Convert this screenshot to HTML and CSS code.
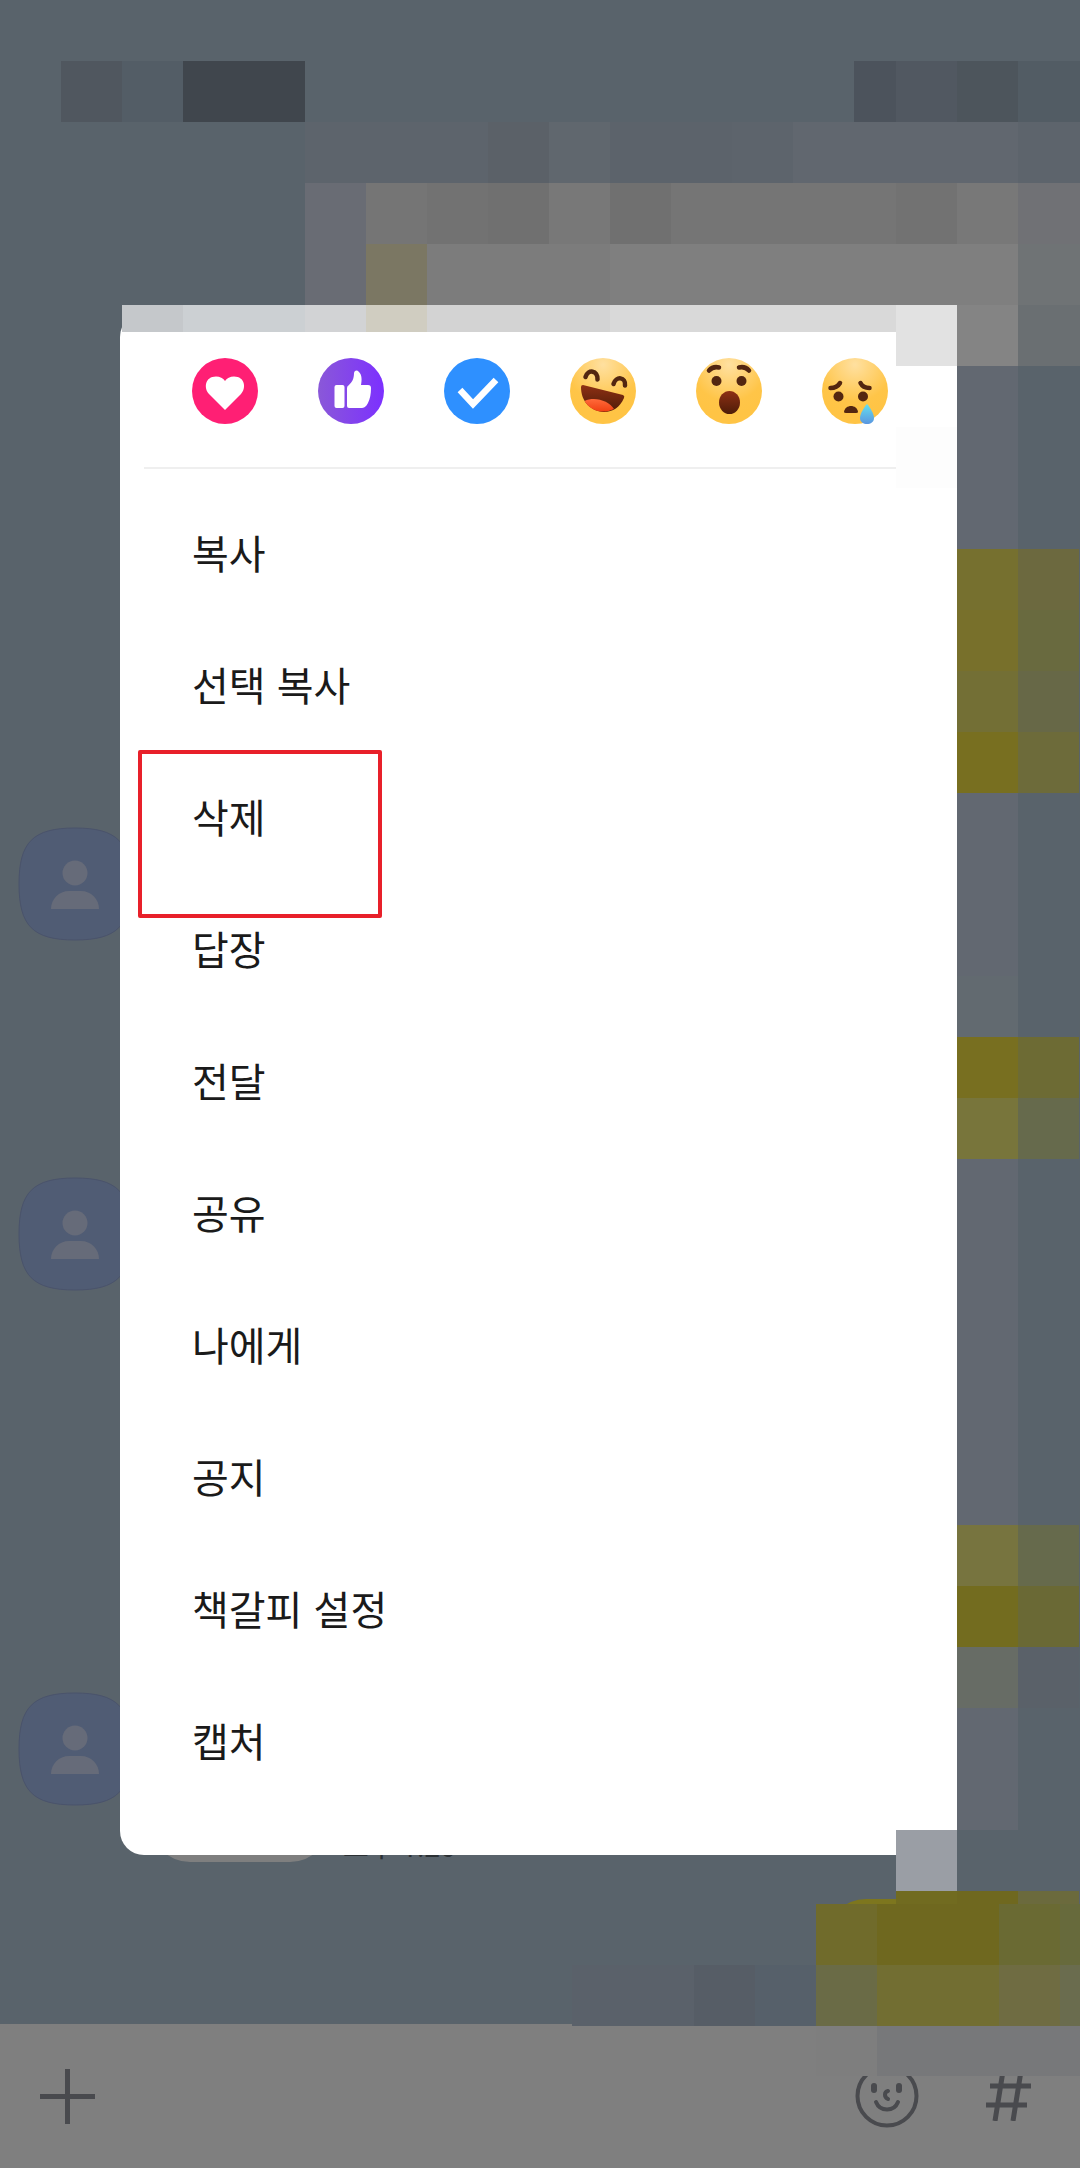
FILE: index.html
```
<!DOCTYPE html>
<html lang="ko">
<head>
<meta charset="utf-8">
<meta name="viewport" content="width=device-width, initial-scale=1">
<title>채팅</title>
<link rel="stylesheet" href="styles.css">
</head>
<body>
<svg class="defs" aria-hidden="true">
  <defs>
    <radialGradient id="face" cx="0.5" cy="0.1" r="0.75">
      <stop offset="0" stop-color="#ffe0a0"/><stop offset="0.75" stop-color="#ffc548"/><stop offset="1" stop-color="#ffc445"/>
    </radialGradient>
    <linearGradient id="violet"><stop offset="0" stop-color="#8a58d8"/><stop offset="1" stop-color="#7c30ff"/></linearGradient>
    <linearGradient id="mouth" x2="0" y2="1"><stop offset="0" stop-color="#8e3014"/><stop offset="1" stop-color="#4e1c08"/></linearGradient>
    <linearGradient id="tongue" x2="0" y2="1"><stop offset="0" stop-color="#ff6a3a"/><stop offset="1" stop-color="#f04012"/></linearGradient>
    <linearGradient id="tear" x2="0" y2="1"><stop offset="0" stop-color="#66e0ee"/><stop offset="1" stop-color="#5a96e0"/></linearGradient>
    <symbol id="person" viewBox="0 0 114 114">
      <path d="M57 1C99 1 113 15 113 57S99 113 57 113 1 99 1 57 15 1 57 1Z" fill="#505c74" stroke="#4a536b" stroke-width="1"/>
      <circle cx="57" cy="46" r="12.500" fill="#666b79"/>
      <path d="M33 82C33 72 41 64 51 64H63C73 64 81 72 81 82Z" fill="#666b79"/>
    </symbol>
  </defs>
</svg>

<div class="screen">
  <main class="chat">
    <div class="message"><svg class="avatar"><use href="#person"/></svg></div>
    <div class="message"><svg class="avatar"><use href="#person"/></svg></div>
    <div class="message">
      <svg class="avatar"><use href="#person"/></svg>
      <div class="bubble"></div>
      <time class="time">오후 1:26</time>
    </div>
    <div class="message mine"><div class="bubble own"></div></div>
  </main>

  <footer class="composer">
    <button class="tool" aria-label="추가"><svg width="55" height="55" viewBox="0 0 55 55" fill="none" stroke="#494a4e" stroke-width="5"><path d="M27.500 0V55M0 27.500H55"/></svg></button>
    <button class="tool emoji" aria-label="이모티콘"><svg width="64" height="64" viewBox="0 0 64 64" fill="none" stroke="#494a4e" stroke-width="4" stroke-linecap="round"><circle cx="32" cy="32" r="29.500"/><path d="M33 27C29 28 29 33 33 35"/><path d="M21 38C25 48 39 48 43 38"/><g fill="#494a4e" stroke="none"><rect x="16" y="19" width="6" height="10" rx="3"/><rect x="41" y="19" width="6" height="10" rx="3"/></g></svg></button>
    <button class="tool" aria-label="샵 검색"><svg width="46" height="50" viewBox="0 0 46 50" fill="none" stroke="#494a4e" stroke-width="5"><path d="M17 0L9 50M35 0L27 50M4 15H45M0 34H41"/></svg></button>
  </footer>

  <div class="overlay">
    <section class="menu" role="dialog" aria-label="메시지 메뉴">
      <div class="reactions">
        <button class="reaction" aria-label="하트"><svg viewBox="0 0 66 66"><circle cx="33" cy="33" r="33" fill="#ff1f74"/><path d="M33 52L17 36C11.500 30 13 18.500 24 18.500C28 18.500 31 20 33 23C35 20 38 18.500 42 18.500C53 18.500 54.500 30 49 36Z" fill="#fff"/></svg></button>
        <button class="reaction" aria-label="좋아요"><svg viewBox="0 0 66 66"><circle cx="33" cy="33" r="33" fill="url(#violet)"/><rect x="16.500" y="27" width="10" height="23" rx="2" fill="#fff"/><path d="M31 27C34 24 36 21 36 15C37 12 39 12 41 14C44 17 44 22 43 27H50C52 27 53 28 53 30C53 36 52 41 50 45C48 49 46 50 43 50H31Q29 50 29 48V30Q29 28 31 27Z" fill="#fff"/></svg></button>
        <button class="reaction" aria-label="확인"><svg viewBox="0 0 66 66"><circle cx="33" cy="33" r="33" fill="#2e90ff"/><path d="M16 32L29 46L52 22" fill="none" stroke="#fff" stroke-width="6.500"/></svg></button>
        <button class="reaction" aria-label="웃음"><svg viewBox="0 0 66 66"><circle cx="33" cy="33" r="33" fill="url(#face)"/><path d="M15.500 19C18 11 28 12 27.500 21.500M43.500 26C46 17.500 56 19 55 27.500" fill="none" stroke="#532610" stroke-width="4.500" stroke-linecap="round"/><path d="M13 27L53 37Q55 38 54 40C50 49 43 54 34 54C20 53 11 43 11 29Q11 27 13 27Z" fill="url(#mouth)"/><path d="M14.500 43C25 38 39 43 44 51C34 56 21 54 14.500 43Z" fill="url(#tongue)"/></svg></button>
        <button class="reaction" aria-label="놀람"><svg viewBox="0 0 66 66"><circle cx="33" cy="33" r="33" fill="url(#face)"/><path d="M13 12.500Q17 8 23 9.500M43 9.500Q49 8 53 12.500" fill="none" stroke="#532610" stroke-width="4.500" stroke-linecap="round"/><circle cx="20.500" cy="23" r="5" fill="#532610"/><circle cx="45.500" cy="23" r="5" fill="#532610"/><ellipse cx="33.500" cy="44.500" rx="10.500" ry="11.500" fill="url(#mouth)"/></svg></button>
        <button class="reaction" aria-label="슬픔"><svg viewBox="0 0 66 66"><circle cx="33" cy="33" r="33" fill="url(#face)"/><path d="M8.500 30Q15 30 18 25M38.500 25Q41 30 47.500 30" fill="none" stroke="#532610" stroke-width="4.500" stroke-linecap="round"/><circle cx="16.500" cy="38.500" r="5" fill="#532610"/><circle cx="41" cy="38.500" r="5" fill="#532610"/><path d="M22 54C23 46 35 46 36 54Q36 55 34 55H24Q22 55 22 54Z" fill="#532610"/><path d="M45 46C48 49 52 56 52 60C52 68 38 68 38 60C38 56 42 49 45 46Z" fill="url(#tear)"/></svg></button>
      </div>
      <ul class="actions">
        <li><button class="action">복사</button></li>
        <li><button class="action">선택 복사</button></li>
        <li><button class="action marked">삭제</button></li>
        <li><button class="action">답장</button></li>
        <li><button class="action">전달</button></li>
        <li><button class="action">공유</button></li>
        <li><button class="action">나에게</button></li>
        <li><button class="action">공지</button></li>
        <li><button class="action">책갈피 설정</button></li>
        <li><button class="action">캡처</button></li>
      </ul>
    </section>
  </div>

  <!-- pixelated privacy mask -->
  <svg class="mask" viewBox="0 0 1080 2168" shape-rendering="crispEdges" aria-hidden="true">
    <path fill="#59636b" d="M122 305H896V332H122ZM957 366H1080V1891H957Z"/>
    <path fill="#50575f" d="M61 61h61v61h-61z"/>
    <path fill="#535d66" d="M122 61h61v61h-61z"/>
    <path fill="#40464d" d="M183 61h122v61h-122z"/>
    <path fill="#4c535c" d="M854 61h42v61h-42z"/>
    <path fill="#515861" d="M896 61h61v61h-61z"/>
    <path fill="#4d555c" d="M957 61h61v61h-61z"/>
    <path fill="#525c64" d="M1018 61h62v61h-62z"/>
    <path fill="#5d646c" d="M305 122h775v61h-775z"/>
    <path fill="#5b6168" d="M488 122h61v61h-61z"/>
    <path fill="#60676e" d="M549 122h61v61h-61z"/>
    <path fill="#5c636b" d="M610 122h122v61h-122z"/>
    <path fill="#61676f" d="M793 122h225v61h-225z"/>
    <path fill="#696c74" d="M305 183h61v122h-61z"/>
    <path fill="#757575" d="M366 183h652v61h-652z"/>
    <path fill="#727272" d="M427 183h61v61h-61zM896 183h61v61h-61z"/>
    <path fill="#707070" d="M488 183h61v61h-61zM610 183h61v61h-61z"/>
    <path fill="#787878" d="M549 183h61v61h-61zM957 183h61v61h-61z"/>
    <path fill="#707175" d="M1018 183h62v61h-62z"/>
    <path fill="#7b7763" d="M366 244h61v61h-61z"/>
    <path fill="#7c7c7c" d="M427 244h183v61h-183z"/>
    <path fill="#7f7f7f" d="M610 244h408v61h-408z"/>
    <path fill="#6f7375" d="M1018 244h62v61h-62z"/>
    <path fill="#c5c8cb" d="M122 305h61v27h-61z"/>
    <path fill="#ccd0d3" d="M183 305h122v27h-122z"/>
    <path fill="#d2d3d5" d="M305 305h61v27h-61z"/>
    <path fill="#d0cdc1" d="M366 305h61v27h-61z"/>
    <path fill="#d3d3d3" d="M427 305h183v27h-183z"/>
    <path fill="#d9d9d9" d="M610 305h286v27h-286z"/>
    <path fill="#e2e2e2" d="M896 305h61v61h-61z"/>
    <path fill="#848484" d="M957 305h61v61h-61z"/>
    <path fill="#6a6f72" d="M1018 305h62v61h-62z"/>
    <path fill="#fff" d="M896 366h61v1464h-61z"/>
    <path fill="#fdfdfd" d="M896 427h61v61h-61z"/>
    <path fill="#626871" d="M957 366h61v1464h-61z"/>
    <path fill="#76702f" d="M957 549h61v61h-61z"/>
    <path fill="#6c693f" d="M1018 549h61v61h-61z"/>
    <path fill="#78702b" d="M957 610h61v61h-61z"/>
    <path fill="#696a3f" d="M1018 610h61v61h-61z"/>
    <path fill="#736f35" d="M957 671h61v61h-61z"/>
    <path fill="#676847" d="M1018 671h61v61h-61z"/>
    <path fill="#786f20" d="M957 732h61v61h-61zM957 1037h61v61h-61z"/>
    <path fill="#6d6b3a" d="M1018 732h61v61h-61z"/>
    <path fill="#626a70" d="M957 976h61v61h-61z"/>
    <path fill="#6d6b34" d="M1018 1037h61v61h-61z"/>
    <path fill="#78753b" d="M957 1098h61v61h-61z"/>
    <path fill="#666a4c" d="M1018 1098h61v61h-61zM1018 1525h61v61h-61z"/>
    <path fill="#77743f" d="M957 1525h61v61h-61z"/>
    <path fill="#736c1f" d="M957 1586h61v61h-61z"/>
    <path fill="#6a6935" d="M1018 1586h61v61h-61z"/>
    <path fill="#676c65" d="M957 1647h61v61h-61z"/>
    <path fill="#5a6169" d="M1018 1647h61v61h-61z"/>
    <path fill="#59636b" d="M957 1830h61v61h-61z"/>
    <path fill="#9a9ea5" d="M896 1830h61v61h-61z"/>
    <path fill="#716b20" d="M896 1891h61v13h-61z"/>
    <path fill="#6f681f" d="M957 1891h61v13h-61zM877 1904h122v61h-122z"/>
    <path fill="#6b6a3d" d="M1018 1891h61v13h-61z"/>
    <path fill="#706b2b" d="M816 1904h61v61h-61z"/>
    <path fill="#6a6a33" d="M999 1904h61v61h-61z"/>
    <path fill="#676a3c" d="M1060 1904h20v61h-20z"/>
    <path fill="#5a616a" d="M572 1965h122v61h-122z"/>
    <path fill="#565d66" d="M694 1965h61v61h-61z"/>
    <path fill="#56606a" d="M755 1965h61v61h-61z"/>
    <path fill="#6a6b46" d="M816 1965h61v61h-61z"/>
    <path fill="#726e32" d="M877 1965h122v61h-122z"/>
    <path fill="#6f6c42" d="M999 1965h61v61h-61z"/>
    <path fill="#6a6c4e" d="M1060 1965h20v61h-20z"/>
    <path fill="#7e7e7e" d="M816 2026h61v50h-61z"/>
    <path fill="#77787a" d="M877 2026h203v50h-203z"/>
  </svg>
</div>
</body>
</html>
```

FILE: styles.css
```
*,
*::after {
  box-sizing: border-box;
}

body {
  margin: 0;
  background: #59636b;
  font-family: "Noto Sans CJK KR", "Noto Sans", sans-serif;
}

button {
  margin: 0;
  padding: 0;
  border: 0;
  background: none;
  font: inherit;
  color: inherit;
  cursor: pointer;
}

svg {
  display: block;
}

.defs {
  position: absolute;
  width: 0;
  height: 0;
}

.screen {
  position: relative;
  display: flex;
  flex-direction: column;
  min-height: 100vh;
  overflow: hidden;
}

/* Conversation behind the menu */
.chat {
  flex: 1;
  display: flex;
  flex-direction: column;
  justify-content: flex-end;
  padding: 0 30px 24px 18px;
}

.message {
  display: flex;
  align-items: flex-end;
  height: 170px;
  margin-bottom: 180px;
}

.message:nth-child(2) {
  margin-bottom: 345px;
}

.message:nth-child(3) {
  margin-bottom: 37px;
}

.chat .mine {
  justify-content: flex-end;
  height: 101px;
  margin-bottom: 0;
}

.avatar {
  align-self: flex-start;
  width: 114px;
  height: 114px;
}

.bubble {
  width: 180px;
  height: 96px;
  margin-left: 18px;
  border-radius: 40px;
  background: #7f7f7f;
}

.own {
  width: 224px;
  height: 101px;
  background: #7d761e;
}

.time {
  margin-left: 13px;
  font-family: Roboto, "Noto Sans CJK KR", sans-serif;
  font-size: 28px;
  line-height: 28px;
  color: #2b3034;
}

/* Input bar */
.composer {
  display: flex;
  align-items: center;
  gap: 67px;
  height: 144px;
  padding: 0 48px 0 40px;
  background: #7f7f7f;
}

.emoji {
  margin-left: auto;
}

/* Message menu */
.overlay {
  position: absolute;
  inset: 0;
  display: flex;
  align-items: center;
  padding: 0 120px;
}

.menu {
  flex: 1;
  padding: 45px 0 47px;
  border-radius: 24px;
  background: #fff;
  color: #1a1a1a;
}

.reactions {
  display: flex;
  gap: 60px;
  margin: 0 24px 19px;
  padding: 0 48px 43px;
  border-bottom: 2px solid #efefef;
}

.reaction {
  flex: none;
  width: 66px;
  height: 66px;
}

.actions {
  margin: 0;
  padding: 0;
  list-style: none;
}

.action {
  display: block;
  width: 100%;
  height: 132px;
  padding: 0 72px 4px;
  font-size: 40px;
  line-height: 60px;
  text-align: left;
}

.marked {
  position: relative;
}

.marked::after {
  content: "";
  position: absolute;
  top: -2px;
  left: 18px;
  width: 244px;
  height: 168px;
  border: 4px solid #e8202a;
  border-radius: 2px;
}

.mask {
  position: absolute;
  top: 0;
  left: 0;
  width: 100%;
  height: auto;
  pointer-events: none;
}
```
